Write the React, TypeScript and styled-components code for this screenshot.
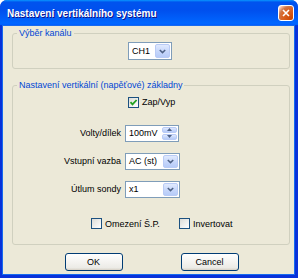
import styled, { createGlobalStyle } from "styled-components";

const GlobalStyle = createGlobalStyle`
  html, body {
    margin: 0;
    padding: 0;
    background: #ffffff;
  }
  body {
    font-family: "Liberation Sans", Arial, sans-serif;
    font-size: 9px;
    color: #000;
  }
`;

const Window = styled.div`
  width: 298px;
  display: flex;
  flex-direction: column;
  background: #0831d9;
  border-radius: 7px 7px 0 0;
`;

const TitleBar = styled.div`
  height: 26px;
  display: flex;
  align-items: center;
  justify-content: space-between;
  padding: 0 4px 0 7px;
  border-radius: 7px 7px 0 0;
  background: linear-gradient(
    180deg,
    #0997ff 0%,
    #0053ee 8%,
    #0050ee 40%,
    #0066ff 88%,
    #0066ff 93%,
    #005bff 95%,
    #003dd7 96%,
    #003dd7 100%
  );
`;

const Title = styled.span`
  color: #fff;
  font-weight: bold;
  font-size: 10px;
  letter-spacing: 0;
  text-shadow: 1px 1px #0f1089;
`;

const CloseButton = styled.button`
  width: 16px;
  height: 16px;
  padding: 0;
  box-sizing: border-box;
  border: 1px solid #fff;
  border-radius: 3px;
  background: radial-gradient(
    circle at 90% 90%,
    #cc4600 0%,
    #dc6527 55%,
    #cd7546 70%,
    #ffccb2 90%,
    #fff 100%
  );
  display: flex;
  align-items: center;
  justify-content: center;
`;

const Body = styled.div`
  margin: 0 4px 4px 3px;
  padding: 2px 4px 3px 9px;
  background: #ece9d8;
  box-shadow: 0 0 0 1px #166aee;
  display: flex;
  flex-direction: column;
`;

const Group = styled.fieldset<{ $gap?: number }>`
  margin: 0 0 ${(p) => p.$gap ?? 0}px;
  padding: 0;
  border: 1px solid #d0d0bf;
  border-radius: 3px;
  min-width: 0;
`;

const Legend = styled.legend`
  margin-left: 4px;
  padding: 0 2px;
  color: #0046d5;
  line-height: 11px;
`;

const ChannelRow = styled.div`
  display: flex;
  padding: 3px 0 8px 115px;
`;

const Form = styled.div`
  display: grid;
  grid-template-columns: 108px auto;
  column-gap: 4px;
  grid-auto-rows: 28px;
  padding-bottom: 13px;
`;

const Label = styled.span`
  justify-self: end;
  align-self: center;
`;

const Cell = styled.div<{ $first?: boolean }>`
  grid-column: 2;
  display: flex;
  align-items: center;
  ${(p) => (p.$first ? "height: 22px; align-self: start; padding-left: 3px;" : "")}
`;

const FirstRow = styled.div`
  grid-column: 1 / span 2;
  height: 25px;
  display: grid;
  grid-template-columns: 108px auto;
  column-gap: 4px;
  margin-bottom: -3px;
`;

const OptionRow = styled.div`
  grid-column: 1 / span 2;
  display: flex;
  align-items: center;
  gap: 19px;
  padding-left: 78px;
  margin-top: 12px;
  height: 17px;
`;

const CheckLabel = styled.label`
  display: flex;
  align-items: center;
  gap: 3px;
`;

const Box = styled.span`
  width: 11px;
  height: 11px;
  box-sizing: border-box;
  border: 1px solid #1c5180;
  background: linear-gradient(135deg, #dcdcd7 0%, #ffffff 100%);
  display: flex;
  align-items: center;
  justify-content: center;
`;

const Combo = styled.div<{ $w: number; $h?: number }>`
  width: ${(p) => p.$w}px;
  height: ${(p) => p.$h ?? 17}px;
  box-sizing: border-box;
  border: 1px solid #7f9db9;
  background: #fff;
  padding: 1px;
  display: flex;
  align-items: stretch;
  justify-content: space-between;
`;

const ComboText = styled.span`
  padding-left: 2px;
  display: flex;
  align-items: center;
`;

const ArrowButton = styled.span`
  width: 15px;
  box-sizing: border-box;
  border: 1px solid #b9cbf6;
  border-radius: 2px;
  background: linear-gradient(180deg, #e1eafe 0%, #c8d8fb 50%, #b6cbf8 100%);
  display: flex;
  align-items: center;
  justify-content: center;
`;

const SpinButtons = styled.span`
  width: 15px;
  display: flex;
  flex-direction: column;
  gap: 1px;
`;

const SpinButton = styled(ArrowButton)`
  width: 100%;
  flex: 1;
`;

const Footer = styled.div`
  display: flex;
  justify-content: center;
  gap: 58px;
  padding: 8px 0 0 1px;
`;

const Button = styled.button`
  width: 58px;
  height: 18px;
  box-sizing: border-box;
  border: 1px solid #003c74;
  border-radius: 3px;
  background: linear-gradient(180deg, #ffffff 0%, #ecebe6 86%, #d6d0c5 100%);
  font-family: "Liberation Sans", Arial, sans-serif;
  font-size: 9px;
  color: #000;
  padding: 0;
`;

const Chevron = () => (
  <svg width="7" height="5" viewBox="0 0 7 5">
    <polyline points="0.8,1 3.5,3.6 6.2,1" fill="none" stroke="#4d6185" strokeWidth="1.5" />
  </svg>
);

const SmallArrow = ({ up }: { up?: boolean }) => (
  <svg width="5" height="3" viewBox="0 0 5 3">
    <polygon points={up ? "0,3 2.5,0 5,3" : "0,0 2.5,3 5,0"} fill="#4d6185" />
  </svg>
);

const Check = () => (
  <svg width="9" height="9" viewBox="0 0 9 9">
    <polyline points="1.5,4.2 3.5,6.4 7.6,2" fill="none" stroke="#21a121" strokeWidth="1.8" />
  </svg>
);

const Select = ({ value, width }: { value: string; width: number }) => (
  <Combo $w={width}>
    <ComboText>{value}</ComboText>
    <ArrowButton>
      <Chevron />
    </ArrowButton>
  </Combo>
);

const Checkbox = ({ label, checked }: { label: string; checked?: boolean }) => (
  <CheckLabel>
    <Box>{checked && <Check />}</Box>
    {label}
  </CheckLabel>
);

export default function App() {
  return (
    <>
      <GlobalStyle />
      <Window>
        <TitleBar>
          <Title>Nastavení vertikálního systému</Title>
          <CloseButton>
            <svg width="8" height="8" viewBox="0 0 8 8">
              <path d="M1 1 L7 7 M7 1 L1 7" stroke="#fff" strokeWidth="1.6" />
            </svg>
          </CloseButton>
        </TitleBar>
        <Body>
          <Group $gap={11}>
            <Legend>Výběr kanálu</Legend>
            <ChannelRow>
              <Combo $w={44} $h={18}>
                <ComboText>CH1</ComboText>
                <ArrowButton>
                  <Chevron />
                </ArrowButton>
              </Combo>
            </ChannelRow>
          </Group>
          <Group>
            <Legend>Nastavení vertikální (napěťové) základny</Legend>
            <Form>
              <FirstRow>
                <span />
                <Cell $first>
                  <Checkbox label="Zap/Vyp" checked />
                </Cell>
              </FirstRow>
              <Label>Volty/dílek</Label>
              <Cell>
                <Combo $w={54}>
                  <ComboText>100mV</ComboText>
                  <SpinButtons>
                    <SpinButton>
                      <SmallArrow up />
                    </SpinButton>
                    <SpinButton>
                      <SmallArrow />
                    </SpinButton>
                  </SpinButtons>
                </Combo>
              </Cell>
              <Label>Vstupní vazba</Label>
              <Cell>
                <Select value="AC (st)" width={55} />
              </Cell>
              <Label>Útlum sondy</Label>
              <Cell>
                <Select value="x1" width={55} />
              </Cell>
              <OptionRow>
                <Checkbox label="Omezení Š.P." />
                <Checkbox label="Invertovat" />
              </OptionRow>
            </Form>
          </Group>
          <Footer>
            <Button>OK</Button>
            <Button>Cancel</Button>
          </Footer>
        </Body>
      </Window>
    </>
  );
}
